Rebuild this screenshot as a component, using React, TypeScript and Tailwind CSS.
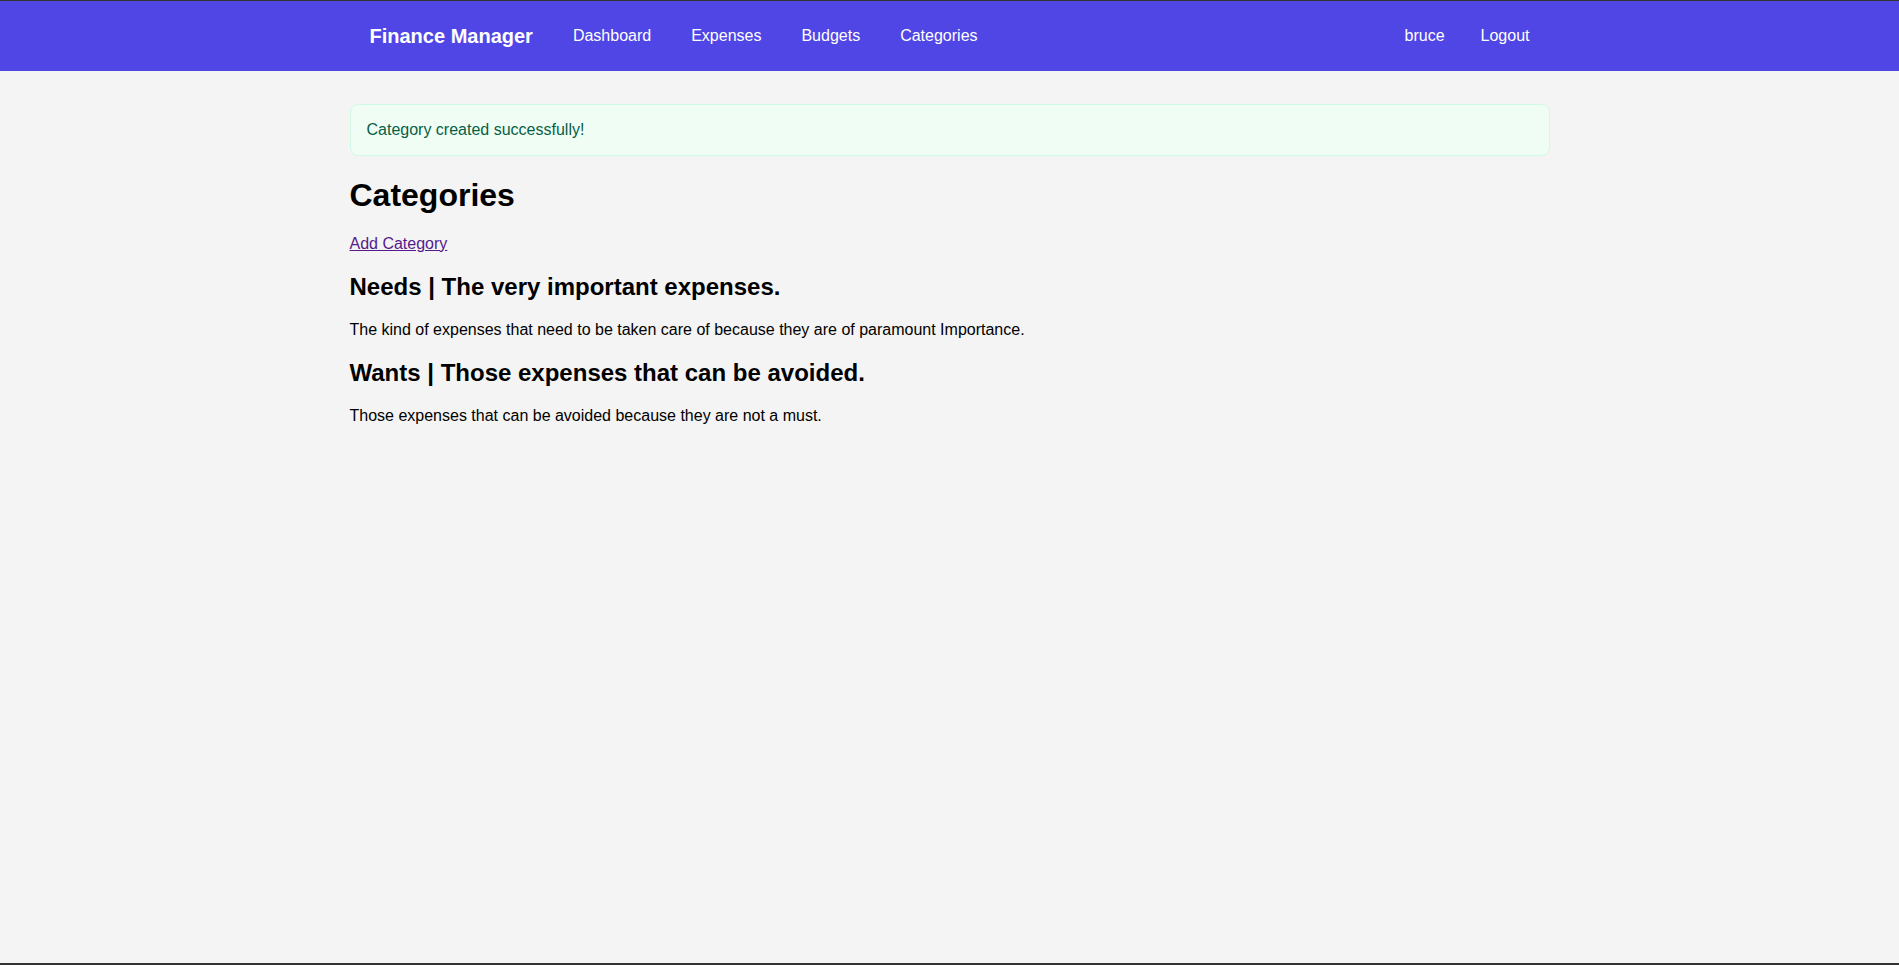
import React from 'react';

const navLinks = ['Dashboard', 'Expenses', 'Budgets', 'Categories'];

const categories = [
    {
        name: 'Needs',
        title: 'The very important expenses.',
        description: 'The kind of expenses that need to be taken care of because they are of paramount Importance.',
    },
    {
        name: 'Wants',
        title: 'Those expenses that can be avoided.',
        description: 'Those expenses that can be avoided because they are not a must.',
    },
];

export default function App() {
    return (
        <div className="h-screen flex flex-col bg-[#f4f4f4] text-black font-['Liberation_Sans',Arial,sans-serif]">
            <div className="h-px bg-[#333333]" />
            <nav className="bg-[#4f46e5] text-white">
                <div className="max-w-[1200px] mx-auto px-5 h-[70px] flex items-center justify-between">
                    <div className="flex items-center gap-10">
                        <a href="#" className="text-[20px] leading-[23px] font-bold">Finance Manager</a>
                        {navLinks.map((link) => (
                            <a key={link} href="#" className="text-[16px] leading-[18px]">{link}</a>
                        ))}
                    </div>
                    <div className="flex items-center gap-9 text-[16px] leading-[18px]">
                        <span>bruce</span>
                        <a href="#">Logout</a>
                    </div>
                </div>
            </nav>

            <main className="flex-1 w-full max-w-[1200px] mx-auto pt-[33px]">
                <div className="border border-[#d1fae5] bg-[#f0fdf4] text-[#065f46] rounded-lg px-4 py-4 text-[16px] leading-[18px]">
                    Category created successfully!
                </div>

                <h1 className="mt-[21px] text-[32px] leading-[37px] font-bold">Categories</h1>

                <p className="mt-[21px] text-[16px] leading-[18px]">
                    <a href="#" className="text-[#551a8b] underline">Add Category</a>
                </p>

                {categories.map((cat) => (
                    <div key={cat.name}>
                        <h2 className="mt-5 text-[24px] leading-[28px] font-bold">
                            {cat.name} | {cat.title}
                        </h2>
                        <p className="mt-5 text-[16px] leading-[18px]">{cat.description}</p>
                    </div>
                ))}
            </main>
            <div className="h-[2px] bg-[#333333]" />
        </div>
    );
}
